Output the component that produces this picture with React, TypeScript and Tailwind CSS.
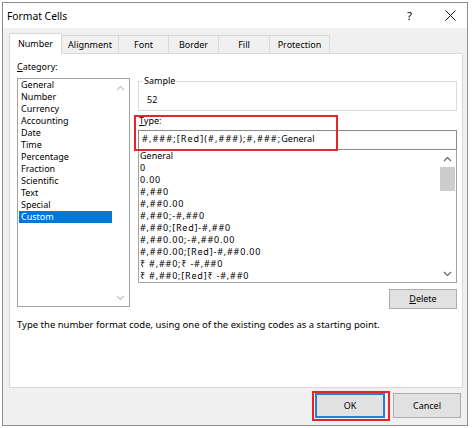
import React from "react";

const Chevron = ({ dir, color }: { dir: "up" | "down"; color: string }) => (
  <svg width="9" height="6" viewBox="0 0 9 6">
    <path
      d={dir === "up" ? "M1 5 L4.5 1.5 L8 5" : "M1 1 L4.5 4.5 L8 1"}
      fill="none"
      stroke={color}
      strokeWidth="1.1"
    />
  </svg>
);

const categories = [
  "General",
  "Number",
  "Currency",
  "Accounting",
  "Date",
  "Time",
  "Percentage",
  "Fraction",
  "Scientific",
  "Text",
  "Special",
  "Custom",
];

const formats = [
  "General",
  "0",
  "0.00",
  "#,##0",
  "#,##0.00",
  "#,##0;-#,##0",
  "#,##0;[Red]-#,##0",
  "#,##0.00;-#,##0.00",
  "#,##0.00;[Red]-#,##0.00",
  "₹ #,##0;₹ -#,##0",
  "₹ #,##0;[Red]₹ -#,##0",
];

export default function App() {
  return (
    <div className="w-[474px] h-[428px] bg-white pt-[2px] pl-[2px] font-['Noto_Sans',sans-serif] text-[9px] leading-[12px] text-black">
      <div className="relative w-[466px] h-[424px] border border-[#8e8e8e] bg-[#f0f0f0] flex flex-col">
        {/* Title bar */}
        <div className="h-[25px] shrink-0 bg-white flex items-center pl-[4px] pr-[11px]">
          <span className="text-[10.3px] leading-[14px] mt-[1px]">Format Cells</span>
          <span className="ml-auto text-[11.5px] leading-[14px] mt-[1px]">?</span>
          <svg className="ml-[33px]" width="11" height="11" viewBox="0 0 11 11">
            <path d="M0.5 0.5 L10.5 10.5 M10.5 0.5 L0.5 10.5" stroke="#111" strokeWidth="1" />
          </svg>
        </div>

        {/* Body */}
        <div className="flex flex-col pl-[6px] pr-[4px] pt-[5px]">
          {/* Tabs */}
          <div className="flex items-end h-[20px]">
            <div className="relative z-10 -mb-px h-[21px] w-[53px] bg-white border-l border-t border-r border-[#d9d9d9] flex items-center justify-center">
              Number
            </div>
            <div className="h-[18px] w-[57px] border-t border-r border-[#d9d9d9] flex items-center justify-center">
              Alignment
            </div>
            <div className="h-[18px] w-[50px] border-t border-r border-[#d9d9d9] flex items-center justify-center">
              Font
            </div>
            <div className="h-[18px] w-[50px] border-t border-r border-[#d9d9d9] flex items-center justify-center">
              Border
            </div>
            <div className="h-[18px] w-[51px] border-t border-r border-[#d9d9d9] flex items-center justify-center">
              Fill
            </div>
            <div className="h-[18px] w-[60px] border-t border-r border-[#d9d9d9] flex items-center justify-center">
              Protection
            </div>
          </div>

          {/* Panel */}
          <div className="w-[454px] h-[335px] bg-white border border-[#d9d9d9] pl-[7px]">
            <div className="flex">
              {/* Left column */}
              <div className="pt-[7px] w-[113px]">
                <div className="h-[12px]">
                  <span className="underline underline-offset-[1px]">C</span>ategory:
                </div>
                <div className="mt-[5px] h-[229px] border border-[#a3a3a3] flex">
                  <div className="flex-1 pl-[1px]">
                    {categories.map((c) => (
                      <div
                        key={c}
                        className={
                          c === "Custom"
                            ? "h-[12px] pl-[2px] bg-[#0078d7] text-white"
                            : "h-[12px] pl-[2px]"
                        }
                      >
                        {c}
                      </div>
                    ))}
                  </div>
                  <div className="w-[17px] flex flex-col justify-between">
                    <div className="h-[17px] flex items-center justify-center">
                      <Chevron dir="up" color="#c2c2c2" />
                    </div>
                    <div className="h-[17px] flex items-center justify-center">
                      <Chevron dir="down" color="#c2c2c2" />
                    </div>
                  </div>
                </div>
              </div>

              {/* Right column */}
              <div className="ml-[8px] mt-[21px] w-[319px] flex flex-col">
                <fieldset className="h-[36px] border border-[#dcdcdc] px-[0px]">
                  <legend className="ml-[4px] px-[1px]">Sample</legend>
                  <div className="mt-[7px] pl-[8px]">52</div>
                </fieldset>
                <div className="mt-[4px] h-[12px] pl-[1px]">
                  <span className="underline underline-offset-[1px]">T</span>ype:
                </div>
                <div className="mt-[3px] h-[20px] border border-[#8a8a8a] pl-[3px] pt-[2px] whitespace-nowrap">
                  <span className="tracking-[1.1px]">#,###;[Red](#,###);#,###;</span>General
                </div>
                <div className="h-[133px] border border-t-0 border-[#a3a3a3] flex">
                  <div className="flex-1 pl-[1px]">
                    {formats.map((f) => (
                      <div
                        key={f}
                        className={
                          f === "General"
                            ? "h-[12px] whitespace-nowrap"
                            : "h-[12px] whitespace-nowrap tracking-[0.8px]"
                        }
                      >
                        {f}
                      </div>
                    ))}
                  </div>
                  <div className="w-[17px] flex flex-col">
                    <div className="h-[17px] flex items-center justify-center">
                      <Chevron dir="up" color="#606060" />
                    </div>
                    <div className="mx-[1px] h-[24px] bg-[#cdcdcd]" />
                    <div className="flex-1" />
                    <div className="h-[17px] flex items-center justify-center">
                      <Chevron dir="down" color="#606060" />
                    </div>
                  </div>
                </div>
                <div className="mt-[6px] self-end w-[68px] h-[20px] bg-[#e1e1e1] border border-[#adadad] flex items-center justify-center">
                  <span>
                    <span className="underline underline-offset-[1px]">D</span>elete
                  </span>
                </div>
              </div>
            </div>
            <div className="mt-[10px] h-[12px] whitespace-nowrap text-[9.5px]">
              Type the number format code, using one of the existing codes as a starting point.
            </div>
          </div>

          {/* Buttons */}
          <div className="mt-[5px] flex justify-end gap-[8px] pr-[2px]">
            <div className="w-[70px] h-[25px] bg-[#e1e1e1] border-2 border-[#2a7fd4] flex items-center justify-center">
              OK
            </div>
            <div className="w-[68px] h-[25px] bg-[#e1e1e1] border border-[#adadad] flex items-center justify-center">
              Cancel
            </div>
          </div>
        </div>

        {/* Red annotation boxes */}
        <div className="absolute left-[131px] top-[112px] w-[204px] h-[36px] border-2 border-[#e3262b] pointer-events-none" />
        <div className="absolute left-[309px] top-[388px] w-[78px] h-[30px] border-2 border-[#e3262b] pointer-events-none" />
      </div>
    </div>
  );
}
